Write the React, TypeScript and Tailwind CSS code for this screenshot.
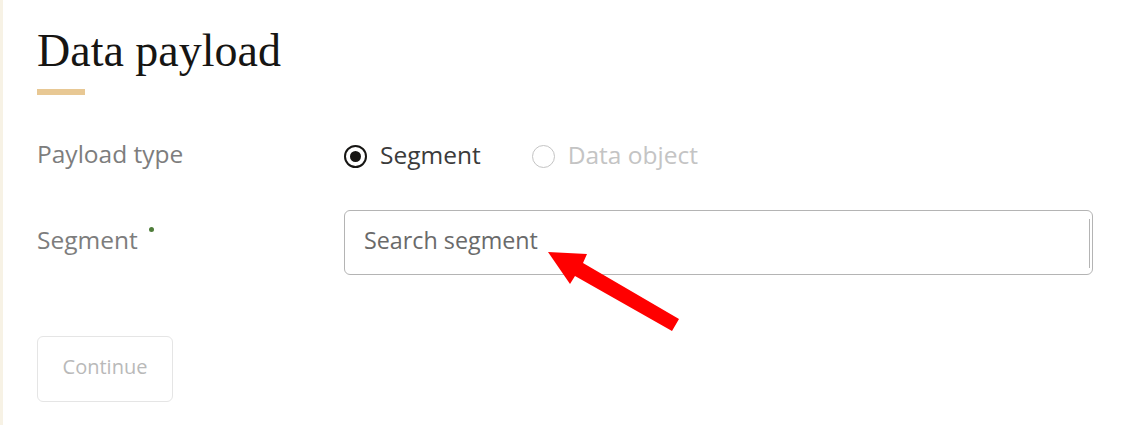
import React from "react";

export default function App() {
  return (
    <div className="relative w-[1127px] h-[425px] bg-white overflow-hidden flex">
      <div className="w-[3px] h-full bg-[#f7f2e5]" />
      <div className="flex flex-col pl-[34px]" style={{ fontFamily: '"Open Sans", sans-serif' }}>
        <h1
          className="mt-[28px] text-[46px] leading-[46px] text-[#161513]"
          style={{ fontFamily: '"Liberation Serif", serif' }}
        >
          Data payload
        </h1>
        <div className="mt-[15px] h-[6px] w-[48px] bg-[#e8c894]" />

        <div className="mt-[38px] flex items-center h-[46px]">
          <div className="w-[307px] text-[24.5px] leading-[32px] text-[#7d7d7d] mb-[5px]">Payload type</div>
          <div className="flex items-center">
            <div className="w-[23px] h-[23px] rounded-full border-[2px] border-[#161513] flex items-center justify-center">
              <div className="w-[11px] h-[11px] rounded-full bg-[#161513]" />
            </div>
            <span className="ml-[13px] text-[24.5px] leading-[32px] text-[#3b3b3b] mb-[3px]">Segment</span>
            <div className="ml-[51px] w-[23px] h-[23px] rounded-full border-[1.5px] border-[#c4c4c4]" />
            <span className="ml-[13px] text-[24.5px] leading-[32px] text-[#c4c4c4] mb-[3px]">Data object</span>
          </div>
        </div>

        <div className="mt-[31px] flex items-center h-[65px]">
          <div className="w-[307px] flex items-start mb-[6px]">
            <span className="text-[24.5px] leading-[32px] text-[#7d7d7d]">Segment</span>
            <span className="ml-[11px] mt-[3px] w-[5px] h-[5px] rounded-full bg-[#4f7d3a]" />
          </div>
          <div className="relative w-[749px] h-[65px] rounded-[6px] border border-[#b4b4b4] flex items-center pl-[19px]">
            <span className="text-[23.3px] leading-[32px] text-[#6a6a6a] mb-[5px]">Search segment</span>
            <div className="absolute right-[2px] top-[8px] bottom-[6px] w-[1px] bg-[#b4b4b4]" />
          </div>
        </div>

        <button className="mt-[61px] w-[136px] h-[66px] rounded-[6px] border border-[#e5e5e5] text-[20px] leading-[28px] pb-[4px] text-[#b9b9b9] bg-white">
          Continue
        </button>
      </div>

      <svg className="absolute left-0 top-0 pointer-events-none" width="1127" height="425">
        <polygon
          points="548,252 587,254 583,263 679,319 672,331 575,276 570,284"
          fill="#ff0000"
        />
      </svg>
    </div>
  );
}
